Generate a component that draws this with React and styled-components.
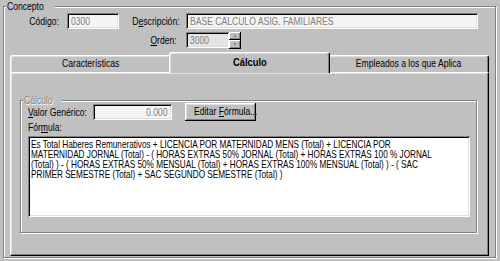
import React from 'react'
import styled, { createGlobalStyle } from 'styled-components'

const Global = createGlobalStyle`
  html, body { margin: 0; padding: 0; background: #c0c0c0; }
  body {
    font-family: "Liberation Sans", Arial, sans-serif;
    font-size: 11px;
    color: #000;
  }
`

// the old dialog font is narrow: squeeze Liberation Sans to match
const Txt = styled.span`
  display: inline-block;
  white-space: nowrap;
  transform: scaleX(${p => p.$sx || 0.78});
  transform-origin: ${p => p.$o || 'left'} center;
`

const Window = styled.div`
  width: 500px;
  height: 261px;
  box-sizing: border-box;
  padding: 6px 4px 0 3px;
  background: #c0c0c0;
  overflow: hidden;
`

const GroupBox = styled.div`
  position: relative;
  box-sizing: border-box;
  height: ${p => p.$h}px;
  border: 1px solid #808080;
  box-shadow: inset 1px 1px 0 #fff, 1px 1px 0 #fff;
  padding: ${p => p.$pad};
`

const Legend = styled.span`
  position: absolute;
  top: -7px;
  left: ${p => p.$left || 2}px;
  padding: 0 1px;
  background: #c0c0c0;
  line-height: 12px;
  color: ${p => (p.$disabled ? '#808080' : '#000')};
  text-shadow: ${p => (p.$disabled ? '1px 1px 0 #fff' : 'none')};
`

const FieldGrid = styled.div`
  display: grid;
  grid-template-columns: 63px 52px 67px 292px;
  grid-auto-rows: 16px;
  row-gap: 3px;
  align-items: center;
`

const Label = styled.label`
  text-align: right;
  padding-right: ${p => p.$pr || 8}px;
  white-space: nowrap;
  grid-column: ${p => p.$col || 'auto'};
`

const Sunken = styled.div`
  box-sizing: border-box;
  height: 16px;
  width: ${p => (p.$w ? `${p.$w}px` : 'auto')};
  background: ${p => p.$bg || '#f4f4f4'};
  color: #808080;
  padding: 2px 4px 0;
  line-height: 12px;
  text-align: ${p => p.$align || 'left'};
  box-shadow: inset 1px 1px 0 #808080, inset -1px -1px 0 #fff,
    inset 2px 2px 0 #000, inset -2px -2px 0 #dfdfdf;
  white-space: nowrap;
  overflow: hidden;
`

const SpinWrap = styled.div`
  grid-column: 4;
  display: flex;
  height: 17px;
`

const Spinner = styled.div`
  display: flex;
  flex-direction: column;
  width: 12px;
  height: 17px;
`

const SpinBtn = styled.div`
  flex: 1;
  display: flex;
  align-items: center;
  justify-content: center;
  background: #c0c0c0;
  box-shadow: inset -1px -1px 0 #000, inset 1px 1px 0 #fff,
    inset -2px -2px 0 #808080;
  color: #808080;
  font-size: 5px;
  line-height: 5px;
`

const Tabs = styled.div`
  margin: 4px 6px 0 6px;
`

const TabStrip = styled.div`
  display: flex;
  align-items: flex-end;
  height: 20px;
  position: relative;
  z-index: 1;
`

const Tab = styled.div`
  flex: 1;
  box-sizing: border-box;
  height: ${p => (p.$active ? 21 : 17)}px;
  margin: ${p => (p.$active ? '0 -2px -1px' : '0')};
  border-top: 1px solid #fff;
  border-left: 1px solid #fff;
  border-right: 1px solid #000;
  border-radius: 3px 3px 0 0;
  box-shadow: inset -1px 0 0 #808080, inset 1px 1px 0 #dfdfdf;
  background: #c0c0c0;
  text-align: center;
  line-height: ${p => (p.$active ? 19 : 15)}px;
  font-weight: ${p => (p.$active ? 700 : 400)};
  position: relative;
  z-index: ${p => (p.$active ? 2 : 1)};
`

const Panel = styled.div`
  box-sizing: border-box;
  height: 184px;
  border-top: 1px solid #fff;
  border-left: 1px solid #fff;
  border-right: 1px solid #000;
  border-bottom: 1px solid #000;
  box-shadow: inset -1px -1px 0 #808080, inset 1px 1px 0 #dfdfdf;
  padding: 27px 11px 0 9px;
`

const ValorRow = styled.div`
  display: flex;
  align-items: center;
  height: 18px;
`

const ValorLabel = styled.label`
  width: 65px;
  white-space: nowrap;
`

const Button = styled.div`
  box-sizing: border-box;
  margin-left: 13px;
  width: 71px;
  height: 18px;
  line-height: 17px;
  text-align: center;
  background: #c0c0c0;
  box-shadow: inset -1px -1px 0 #000, inset 1px 1px 0 #fff,
    inset -2px -2px 0 #808080, inset 2px 2px 0 #dfdfdf;
  white-space: nowrap;
`

const FormulaLabel = styled.div`
  height: 13px;
  line-height: 13px;
`

const FormulaBox = styled.div`
  box-sizing: border-box;
  margin-top: 2px;
  height: 81px;
  background: #fff;
  padding: 3px 3px 0;
  overflow: hidden;
  box-shadow: inset 1px 1px 0 #808080, inset -1px -1px 0 #fff,
    inset 2px 2px 0 #000, inset -2px -2px 0 #dfdfdf;
`

const FormulaText = styled.div`
  width: 560px;
  font-size: 10.5px;
  line-height: 10px;
  white-space: pre-line;
  transform: scaleX(0.78);
  transform-origin: left top;
`

const formula = `Es Total Haberes Remunerativos + LICENCIA POR MATERNIDAD MENS (Total) + LICENCIA POR
MATERNIDAD JORNAL (Total) - ( HORAS EXTRAS 50% JORNAL (Total) + HORAS EXTRAS 100 % JORNAL
(Total) ) - ( HORAS EXTRAS 50% MENSUAL (Total) + HORAS EXTRAS 100% MENSUAL (Total) ) - ( SAC
PRIMER SEMESTRE (Total) + SAC SEGUNDO SEMESTRE (Total) )`

export default function App() {
  return (
    <Window>
      <Global />
      <GroupBox $h={252} $pad="6px 0 0 0">
        <Legend><Txt>Concepto</Txt></Legend>
        <FieldGrid>
          <Label><Txt $o="right">Código:</Txt></Label>
          <Sunken><Txt>0300</Txt></Sunken>
          <Label $pr={9}><Txt $o="right">D<u>e</u>scripción:</Txt></Label>
          <Sunken><Txt>BASE CALCULO ASIG. FAMILIARES</Txt></Sunken>
          <Label $col={3} $pr={9}><Txt $o="right"><u>O</u>rden:</Txt></Label>
          <SpinWrap>
            <Sunken $w={43} $bg="#e4e4e4"><Txt>3000</Txt></Sunken>
            <Spinner>
              <SpinBtn>▲</SpinBtn>
              <SpinBtn>▼</SpinBtn>
            </Spinner>
          </SpinWrap>
        </FieldGrid>

        <Tabs>
          <TabStrip>
            <Tab><Txt $o="center">Características</Txt></Tab>
            <Tab $active><Txt $o="center" $sx={0.85}>Cálculo</Txt></Tab>
            <Tab><Txt $o="center">Empleados a los que Aplica</Txt></Tab>
          </TabStrip>
          <Panel>
            <GroupBox $h={133} $pad="2px 6px 0 7px">
              <Legend $disabled><Txt>Cálculo</Txt></Legend>
              <ValorRow>
                <ValorLabel><Txt><u>V</u>alor Genérico:</Txt></ValorLabel>
                <Sunken $w={79} $align="right"><Txt $o="right">0.000</Txt></Sunken>
                <Button><Txt $o="center">Editar <u>F</u>órmula...</Txt></Button>
              </ValorRow>
              <FormulaLabel><Txt>Fór<u>m</u>ula:</Txt></FormulaLabel>
              <FormulaBox>
                <FormulaText>{formula}</FormulaText>
              </FormulaBox>
            </GroupBox>
          </Panel>
        </Tabs>
      </GroupBox>
    </Window>
  )
}
